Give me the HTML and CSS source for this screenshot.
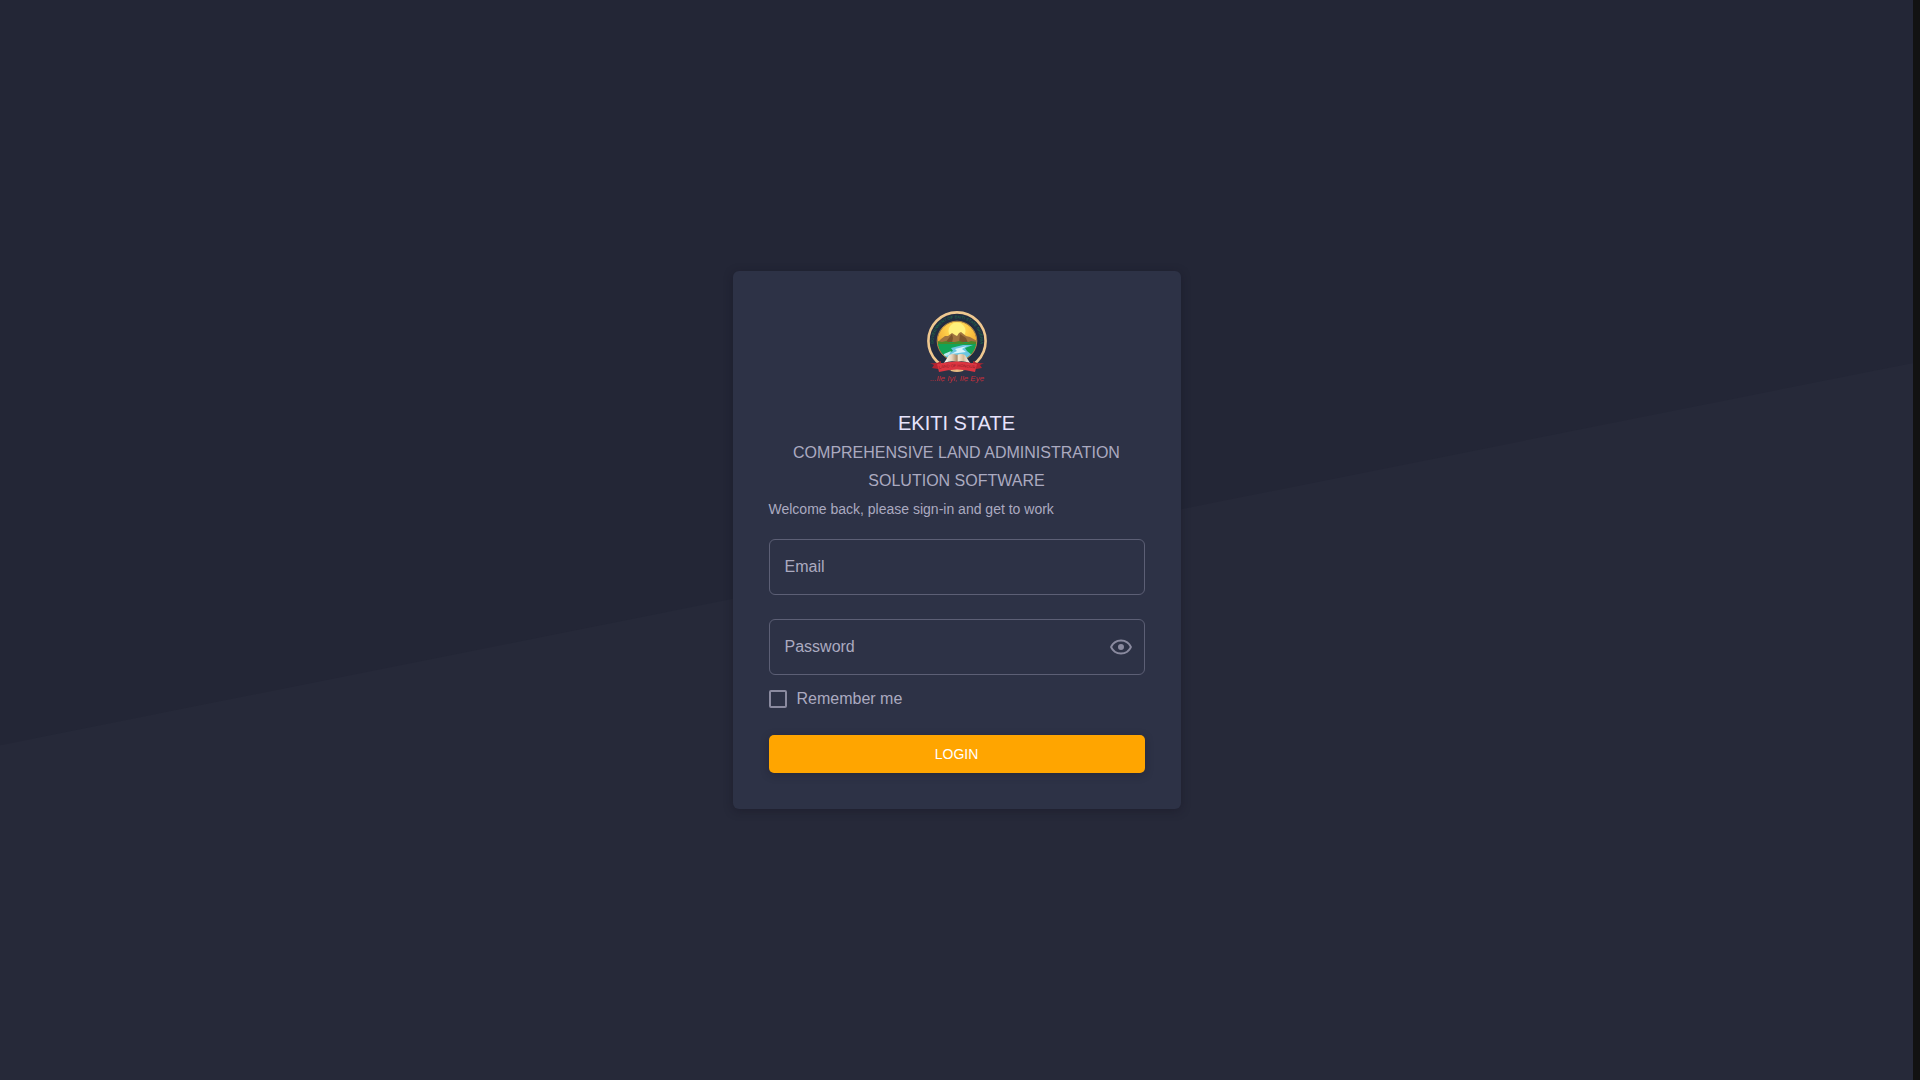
FILE: index.html
```html
<!DOCTYPE html>
<html lang="en">
<head>
  <meta charset="UTF-8" />
  <meta name="viewport" content="width=device-width, initial-scale=1" />
  <title>Ekiti State – Login</title>
  <link rel="stylesheet" href="styles.css">
</head>
<body>

<main class="login-page">
  <section class="card">
    <svg class="logo" width="80" height="80" viewBox="0 0 80 80" role="img" aria-label="Government of Ekiti State, Nigeria">
      <defs>
        <clipPath id="scene"><circle cx="40" cy="34" r="19.5" /></clipPath>
        <radialGradient id="sky" cx="40" cy="22" r="22" gradientUnits="userSpaceOnUse">
          <stop offset="0" stop-color="#ffe873" />
          <stop offset="0.45" stop-color="#ffd04a" />
          <stop offset="1" stop-color="#f0ac35" />
        </radialGradient>
        <linearGradient id="book" x1="0" x2="1">
          <stop offset="0" stop-color="#fff" />
          <stop offset="0.3" stop-color="#e6d3ba" />
          <stop offset="0.5" stop-color="#a98a68" />
          <stop offset="0.56" stop-color="#f3e6d2" />
          <stop offset="0.75" stop-color="#d8bd9a" />
          <stop offset="1" stop-color="#fff" />
        </linearGradient>
        <path id="ring-text" d="M24 52 A23.5 23.5 0 1 1 56 52" />
        <path id="ribbon-text" d="M20 62 Q40 58 60 62" />
      </defs>
      <circle cx="40" cy="34" r="28.6" fill="#222c40" stroke="#efc890" stroke-width="2.6" />
      <text font-family="Liberation Serif, serif" font-size="4" fill="#1b7a4c">
        <textPath href="#ring-text" startOffset="50%" text-anchor="middle">GOVERNMENT OF EKITI STATE NIGERIA</textPath>
      </text>
      <g clip-path="url(#scene)">
        <rect x="20" y="14" width="40" height="22" fill="url(#sky)" />
        <circle cx="40" cy="24" r="8.5" fill="#fff07c" />
        <path d="M20 36 L24 32 L28 29 L31 29 L35 26 L38 28 L40 29 L42 26 L44 25 L49 29 L53 30 L60 34 L60 36Z" fill="#a0743f" />
        <path d="M28 36 L35 27 L36 31 L35 36Z M42 36 L43 27 L49 31 L51 36Z" fill="#7c552c" />
        <rect x="20" y="35" width="40" height="22" fill="#12a457" />
        <path d="M20 34 L25 35 L29 34 L34 36 L42 34 L49 36 L54 34 L60 35 L60 37 L20 37Z" fill="#4b8a2a" />
        <path d="M34 41 L46 38 L56 38 L48 41 L50 44 L55 48 L54 52 L26 52 L28 47 L36 44Z" fill="#6cc6e2" />
        <path d="M38 42 L50 39 L45 42 L49 45 L34 47 L40 44Z" fill="#d9f4fb" />
        <path d="M27 47 L34 44 L32 48 L26 50Z" fill="#bfe9ee" />
      </g>
      <circle cx="40" cy="34" r="19.8" fill="none" stroke="#b98b45" />
      <path d="M27 56 L32 48 Q36 46 40 48 Q44 46 48 48 L53 56 Q45 53 40 55 Q34 53 27 56Z" fill="url(#book)" />
      <path d="M34 62 Q40 65 46 62 L46 64 Q40 66 34 64Z" fill="#e9bd80" />
      <path d="M13 56 Q20 57 24 54 L24 60 L21 62 L15 61 L17 58Z M67 56 Q60 57 56 54 L56 60 L59 62 L65 61 L63 58Z" fill="#b32430" />
      <path d="M20 57 Q40 52 60 57 L58 65 Q40 60 22 65Z" fill="#dc3540" />
      <text font-family="Liberation Serif, serif" font-size="4" fill="#8c1c26">
        <textPath href="#ribbon-text" startOffset="50%" text-anchor="middle">LAND OF HONOUR</textPath>
      </text>
      <text x="40" y="74" text-anchor="middle" font-family="Liberation Serif, serif" font-size="8" font-style="italic" fill="#c4303c">...Ilẹ Iyi, Ilẹ Ẹyẹ</text>
    </svg>

    <h1>EKITI STATE</h1>
    <h2>COMPREHENSIVE LAND ADMINISTRATION SOLUTION SOFTWARE</h2>
    <p class="welcome">Welcome back, please sign-in and get to work</p>

    <form>
      <div class="field">
        <input type="email" id="email" placeholder=" ">
        <label for="email">Email</label>
      </div>
      <div class="field">
        <input type="password" id="password" placeholder=" ">
        <label for="password">Password</label>
        <button type="button" class="toggle" aria-label="Show password">
          <svg width="24" height="24" viewBox="0 0 24 24" fill="currentColor"><path d="M12 9a3 3 0 0 1 3 3 3 3 0 0 1-3 3 3 3 0 0 1-3-3 3 3 0 0 1 3-3m0-4.500c5 0 9.270 3.110 11 7.500-1.730 4.390-6 7.500-11 7.500S2.730 16.390 1 12c1.730-4.390 6-7.500 11-7.500M3.180 12a9.821 9.821 0 0 0 17.640 0 9.821 9.821 0 0 0-17.640 0z" /></svg>
        </button>
      </div>
      <label class="remember">
        <input type="checkbox" name="remember">
        Remember me
      </label>
      <button type="submit" class="login-btn">LOGIN</button>
    </form>
  </section>
</main>

</body>
</html>
```
FILE: styles.css
```css
* {
  margin: 0; padding: 0; box-sizing: border-box;
  font-family: 'Liberation Sans', Arial, sans-serif;
}
body {
  background: #121212;
  color: #abaac0;
  padding-right: 7px;
}

.login-page {
  position: relative;
  min-height: 100vh;
  display: flex;
  justify-content: center;
  align-items: center;
  padding: 20px;
  background: #232636;
}
/* slanted lighter area behind the card */
.login-page::before {
  content: '';
  position: absolute;
  inset: 0;
  background: #262939;
  clip-path: polygon(0 69%, 100% 33.6%, 100% 100%, 0 100%);
}

.card {
  position: relative;
  width: 100%;
  max-width: 448px;
  padding: 36px;
  background: #2d3246;
  border-radius: 6px;
  box-shadow: 0 2px 10px rgba(19,17,32,0.4);
}
.logo {
  display: block;
  margin: 0 auto 20px;
}
h1 {
  font-size: 20px;
  font-weight: 400;
  line-height: 32px;
  text-align: center;
  color: #e7e3fc;
}
h2 {
  font-size: 16px;
  font-weight: 400;
  line-height: 28px;
  text-align: center;
}
.welcome {
  font-size: 14px;
  line-height: 28px;
  margin-bottom: 16px;
}

.field {
  position: relative;
  margin-bottom: 24px;
}
.field input {
  display: block;
  width: 100%;
  height: 56px;
  padding: 0 16px;
  font-size: 16px;
  color: #e7e3fc;
  background: transparent;
  border: 1px solid #5c5f75;
  border-radius: 6px;
  outline: none;
}
.field input:focus {
  border-color: #ffa500;
}
.field label {
  position: absolute;
  left: 16px;
  top: 16px;
  line-height: 24px;
  pointer-events: none;
}
.field input:focus + label,
.field input:not(:placeholder-shown) + label {
  top: -12px;
  padding: 0 4px;
  font-size: 12px;
  background: #2d3246;
}
.toggle {
  position: absolute;
  right: 12px;
  top: 16px;
  height: 24px;
  border: none;
  background: none;
  color: #8a8a9f;
  cursor: pointer;
}

.remember {
  display: flex;
  align-items: center;
  gap: 10px;
  height: 40px;
  margin: -20px 0 16px;
}
.remember input {
  appearance: none;
  width: 18px;
  height: 18px;
  border: 2px solid #8a8a9f;
  border-radius: 2px;
}
.remember input:checked {
  background: #ffa500;
  border-color: #ffa500;
}

.login-btn {
  display: block;
  width: 100%;
  height: 38px;
  font-size: 14px;
  color: white;
  background: #ffa500;
  border: none;
  border-radius: 5px;
  box-shadow: 0 2px 8px rgba(19,17,32,0.3);
  cursor: pointer;
}
```
